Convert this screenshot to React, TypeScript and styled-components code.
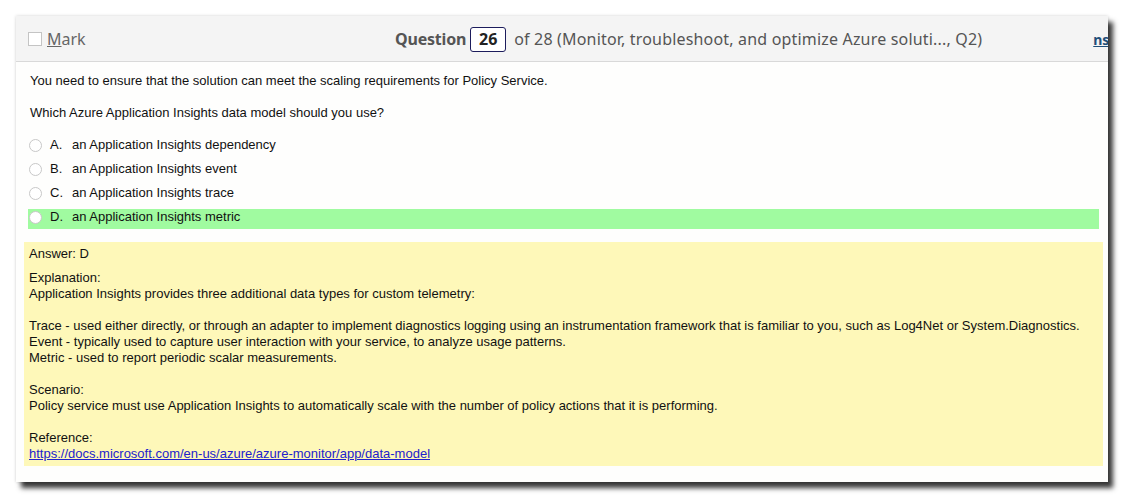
import React from "react";
import styled, { createGlobalStyle } from "styled-components";

const Global = createGlobalStyle`
  html, body { margin: 0; padding: 0; background: #ffffff; }
  body { font-family: "Liberation Sans", Arial, sans-serif; }
`;

const Page = styled.div`
  padding: 16px 0 0 16px;
  width: 1125px;
  height: 498px;
  box-sizing: border-box;
`;

const Card = styled.div`
  width: 1092px;
  height: 466px;
  background: #fefefd;
  box-shadow: 5px 6px 5px rgba(0, 0, 0, 0.78), 0 0 3px rgba(0, 0, 0, 0.18);
  display: flex;
  flex-direction: column;
  overflow: hidden;
`;

const Header = styled.div`
  height: 46px;
  flex: none;
  background: #f4f4f4;
  border-bottom: 1px solid #d9d9d9;
  display: flex;
  align-items: center;
  padding-left: 12px;
  padding-top: 1px;
  box-sizing: border-box;
  font-family: "Noto Sans", "Open Sans", sans-serif;
  font-size: 16px;
  color: #555;
  white-space: nowrap;
  overflow: hidden;
`;

const MarkLabel = styled.label`
  display: flex;
  align-items: center;
  gap: 5px;
  color: #666;
  width: 367px;
  flex: none;
`;

const CheckBox = styled.span`
  width: 12px;
  height: 12px;
  border: 1px solid #c4c4c4;
  background: #fff;
  display: inline-block;
`;

const Title = styled.div`
  display: flex;
  align-items: center;
  gap: 4px;
  flex: none;
`;

const Bold = styled.span`
  font-weight: 700;
  color: #555;
  letter-spacing: -0.2px;
`;

const Rest = styled.span`
  letter-spacing: 0.18px;
`;

const NumBox = styled.span`
  display: inline-flex;
  align-items: center;
  justify-content: center;
  width: 34px;
  height: 23px;
  border: 1px solid #1c1c5c;
  border-radius: 3px;
  background: #fff;
  color: #222;
  font-weight: 700;
  margin-right: 4px;
`;

const RightLink = styled.a`
  margin-left: 111px;
  flex: none;
  color: #1f4e79;
  font-weight: 700;
  font-size: 14px;
  text-decoration: underline;
`;

const Body = styled.div`
  padding: 11px 9px 0 12px;
  font-size: 13px;
  line-height: 16px;
  color: #111;
`;

const Para = styled.p`
  margin: 0 0 16px 2px;
`;

const Options = styled.div`
  display: flex;
  flex-direction: column;
  gap: 4px;
  margin-top: 10px;
`;

const Option = styled.div<{ $correct?: boolean }>`
  height: 20px;
  box-sizing: border-box;
  padding-bottom: 4px;
  display: flex;
  align-items: center;
  background: ${(p) => (p.$correct ? "#a0fba0" : "transparent")};
`;

const Radio = styled.span`
  width: 11px;
  height: 11px;
  border-radius: 50%;
  border: 1px solid #c8c8c8;
  background: #fff;
  margin: 0 8px 0 1px;
  flex: none;
`;

const Letter = styled.span`
  width: 22px;
  flex: none;
`;

const AnswerBox = styled.div`
  margin: 13px -4px 0 -4px;
  background: #fef8b9;
  padding: 4px 5px 4px 5px;
  height: 216px;
  box-sizing: content-box;
`;

const Block = styled.div`
  margin-top: 8px;
  &:first-child { margin-top: 0; }
`;

const Line = styled.div`
  min-height: 16px;
`;

const Link = styled.a`
  color: #2222cc;
  text-decoration: underline;
`;

const options = [
  { l: "A.", t: "an Application Insights dependency" },
  { l: "B.", t: "an Application Insights event" },
  { l: "C.", t: "an Application Insights trace" },
  { l: "D.", t: "an Application Insights metric", c: true },
];

export default function App() {
  return (
    <>
      <Global />
      <Page>
        <Card>
          <Header>
            <MarkLabel>
              <CheckBox />
              <span>
                <u>M</u>ark
              </span>
            </MarkLabel>
            <Title>
              <Bold>Question</Bold>
              <NumBox>26</NumBox>
              <Rest>of 28 (Monitor, troubleshoot, and optimize Azure soluti..., Q2)</Rest>
            </Title>
            <RightLink>ns</RightLink>
          </Header>
          <Body>
            <Para>You need to ensure that the solution can meet the scaling requirements for Policy Service.</Para>
            <Para>Which Azure Application Insights data model should you use?</Para>
            <Options>
              {options.map((o) => (
                <Option key={o.l} $correct={o.c}>
                  <Radio />
                  <Letter>{o.l}</Letter>
                  <span>{o.t}</span>
                </Option>
              ))}
            </Options>
            <AnswerBox>
              <Block>Answer: D</Block>
              <Block>
                <Line>Explanation:</Line>
                <Line>Application Insights provides three additional data types for custom telemetry:</Line>
                <Line />
                <Line>
                  Trace - used either directly, or through an adapter to implement diagnostics logging using an instrumentation framework that is familiar to you, such as Log4Net or System.Diagnostics.
                </Line>
                <Line>Event - typically used to capture user interaction with your service, to analyze usage patterns.</Line>
                <Line>Metric - used to report periodic scalar measurements.</Line>
                <Line />
                <Line>Scenario:</Line>
                <Line>Policy service must use Application Insights to automatically scale with the number of policy actions that it is performing.</Line>
                <Line />
                <Line>Reference:</Line>
                <Line>
                  <Link href="#">https://docs.microsoft.com/en-us/azure/azure-monitor/app/data-model</Link>
                </Line>
              </Block>
            </AnswerBox>
          </Body>
        </Card>
      </Page>
    </>
  );
}
